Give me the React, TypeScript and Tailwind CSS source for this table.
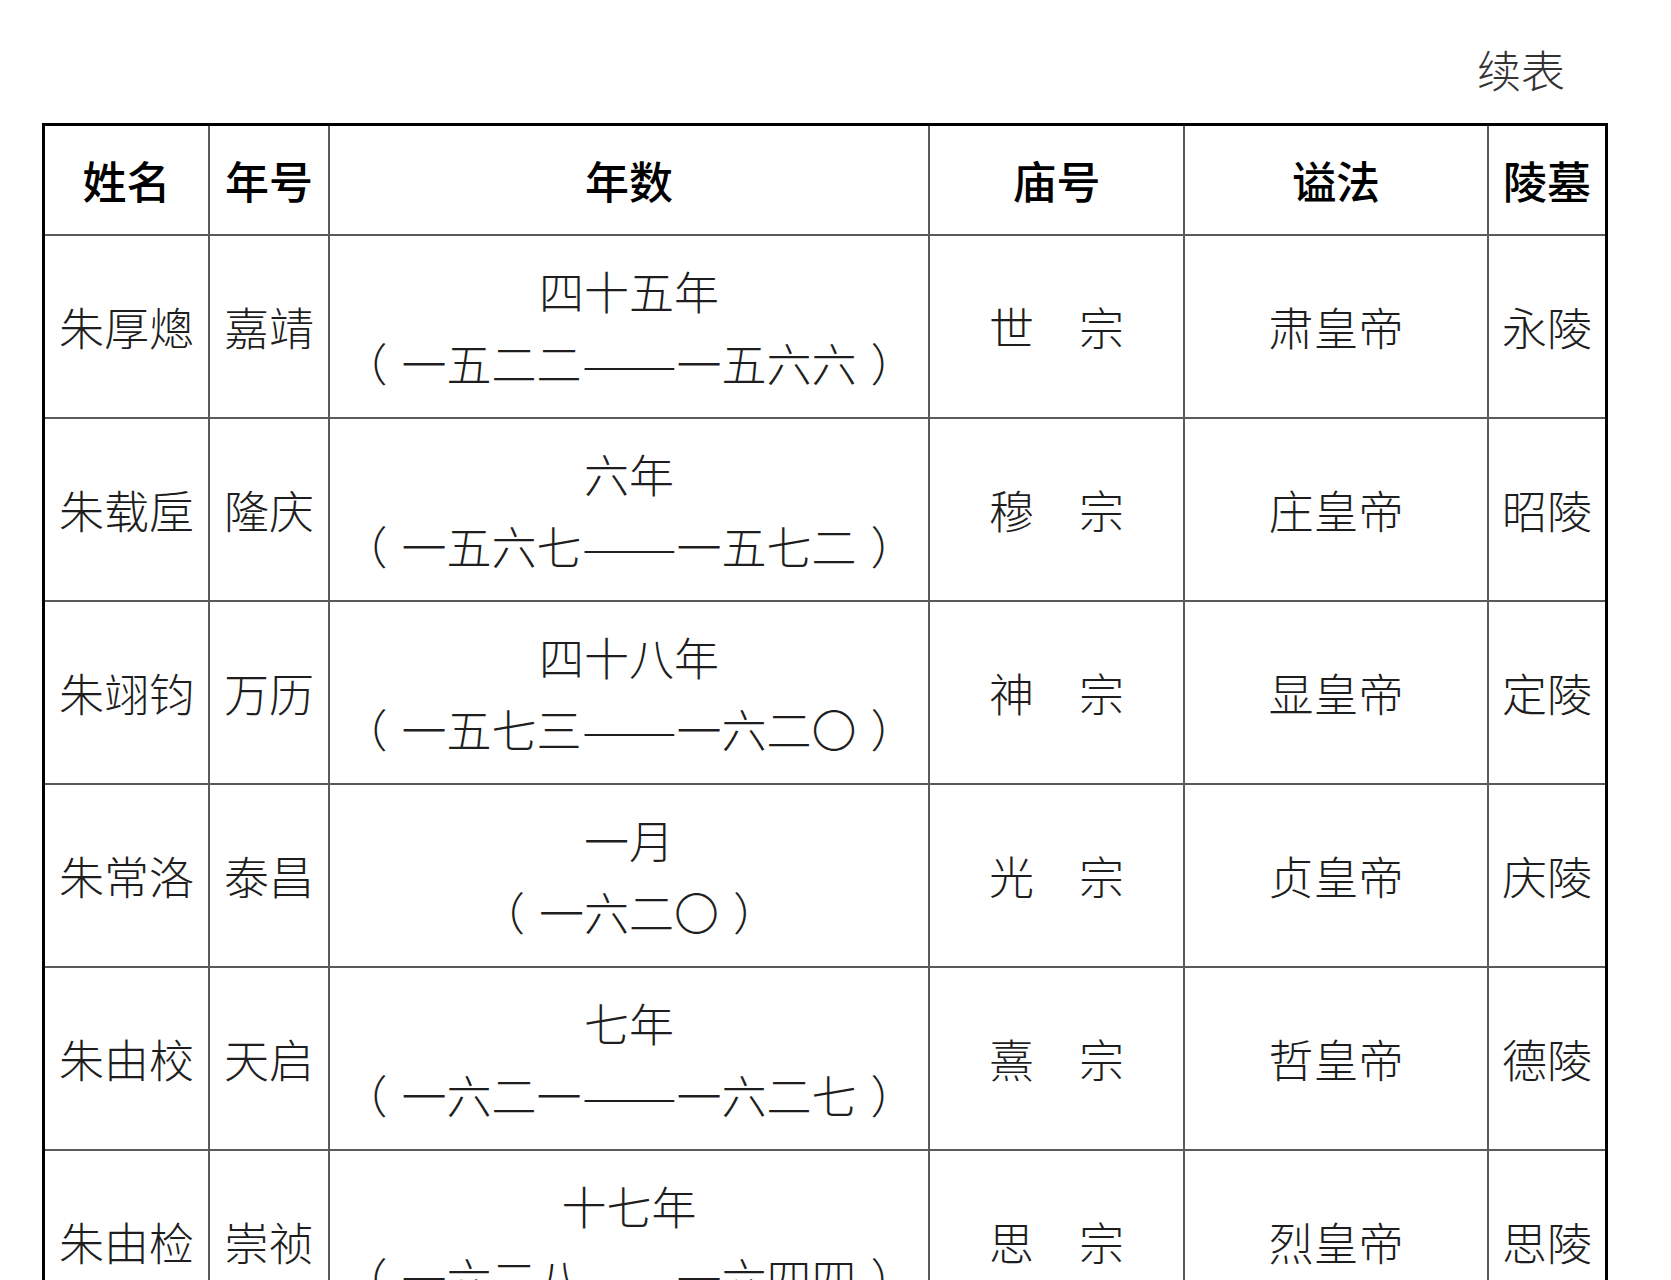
import React from "react";

type Row = {
  name: string;
  era: string;
  y1: string;
  a: string;
  b?: string;
  temple: string;
  post: string;
  tomb: string;
};

const rows: Row[] = [
  { name: "朱厚熜", era: "嘉靖", y1: "四十五年", a: "一五二二", b: "一五六六", temple: "世　宗", post: "肃皇帝", tomb: "永陵" },
  { name: "朱载垕", era: "隆庆", y1: "六年", a: "一五六七", b: "一五七二", temple: "穆　宗", post: "庄皇帝", tomb: "昭陵" },
  { name: "朱翊钧", era: "万历", y1: "四十八年", a: "一五七三", b: "一六二〇", temple: "神　宗", post: "显皇帝", tomb: "定陵" },
  { name: "朱常洛", era: "泰昌", y1: "一月", a: "一六二〇", temple: "光　宗", post: "贞皇帝", tomb: "庆陵" },
  { name: "朱由校", era: "天启", y1: "七年", a: "一六二一", b: "一六二七", temple: "熹　宗", post: "哲皇帝", tomb: "德陵" },
  { name: "朱由检", era: "崇祯", y1: "十七年", a: "一六二八", b: "一六四四", temple: "思　宗", post: "烈皇帝", tomb: "思陵" },
];

const cell = "flex items-center justify-center border-b-2 border-r-2 border-[#5a5a5a]";
const last = "flex items-center justify-center border-b-2 border-[#5a5a5a]";
const body = "text-[45px] font-light text-[#1e1e1e]";
const head = "text-[44px] font-medium text-black";

export default function App() {
  return (
    <div
      className="min-h-screen w-full bg-white"
      style={{ fontFamily: '"Noto Sans CJK SC", "Noto Sans", sans-serif' }}
    >
      <div className="flex justify-end pr-[106px] pt-[42px] h-[123px]">
        <span className="text-[44px] font-light leading-[54px] text-[#333]">续表</span>
      </div>
      <div className="ml-[42px] w-[1566px] border-[3px] border-black">
        <div className="grid grid-cols-[165px_120px_600px_255px_304px_116px]">
          <div className={`${cell} h-[110px]`}><span className={head}>姓名</span></div>
          <div className={`${cell} h-[110px]`}><span className={head}>年号</span></div>
          <div className={`${cell} h-[110px]`}><span className={head}>年数</span></div>
          <div className={`${cell} h-[110px]`}><span className={head}>庙号</span></div>
          <div className={`${cell} h-[110px]`}><span className={head}>谥法</span></div>
          <div className={`${last} h-[110px]`}><span className={head}>陵墓</span></div>
          {rows.map((r) => (
            <React.Fragment key={r.name}>
              <div className={`${cell} h-[183px]`}><span className={body}>{r.name}</span></div>
              <div className={`${cell} h-[183px]`}><span className={body}>{r.era}</span></div>
              <div className={`${cell} h-[183px] flex-col`}>
                <span className={`${body} leading-[72px]`}>{r.y1}</span>
                <span className={`${body} leading-[72px] whitespace-nowrap`}>
                  <span className="inline-block -ml-[14px] mr-[14px]">（</span>
                  {r.a}
                  {r.b ? (
                    <>
                      <span className="inline-block origin-left scale-x-[1.27] mr-[20px]">——</span>
                      {r.b}
                    </>
                  ) : null}
                  <span className="inline-block ml-[14px] -mr-[14px]">）</span>
                </span>
              </div>
              <div className={`${cell} h-[183px]`}><span className={`${body} whitespace-pre`}>{r.temple}</span></div>
              <div className={`${cell} h-[183px]`}><span className={body}>{r.post}</span></div>
              <div className={`${last} h-[183px]`}><span className={body}>{r.tomb}</span></div>
            </React.Fragment>
          ))}
        </div>
      </div>
    </div>
  );
}
